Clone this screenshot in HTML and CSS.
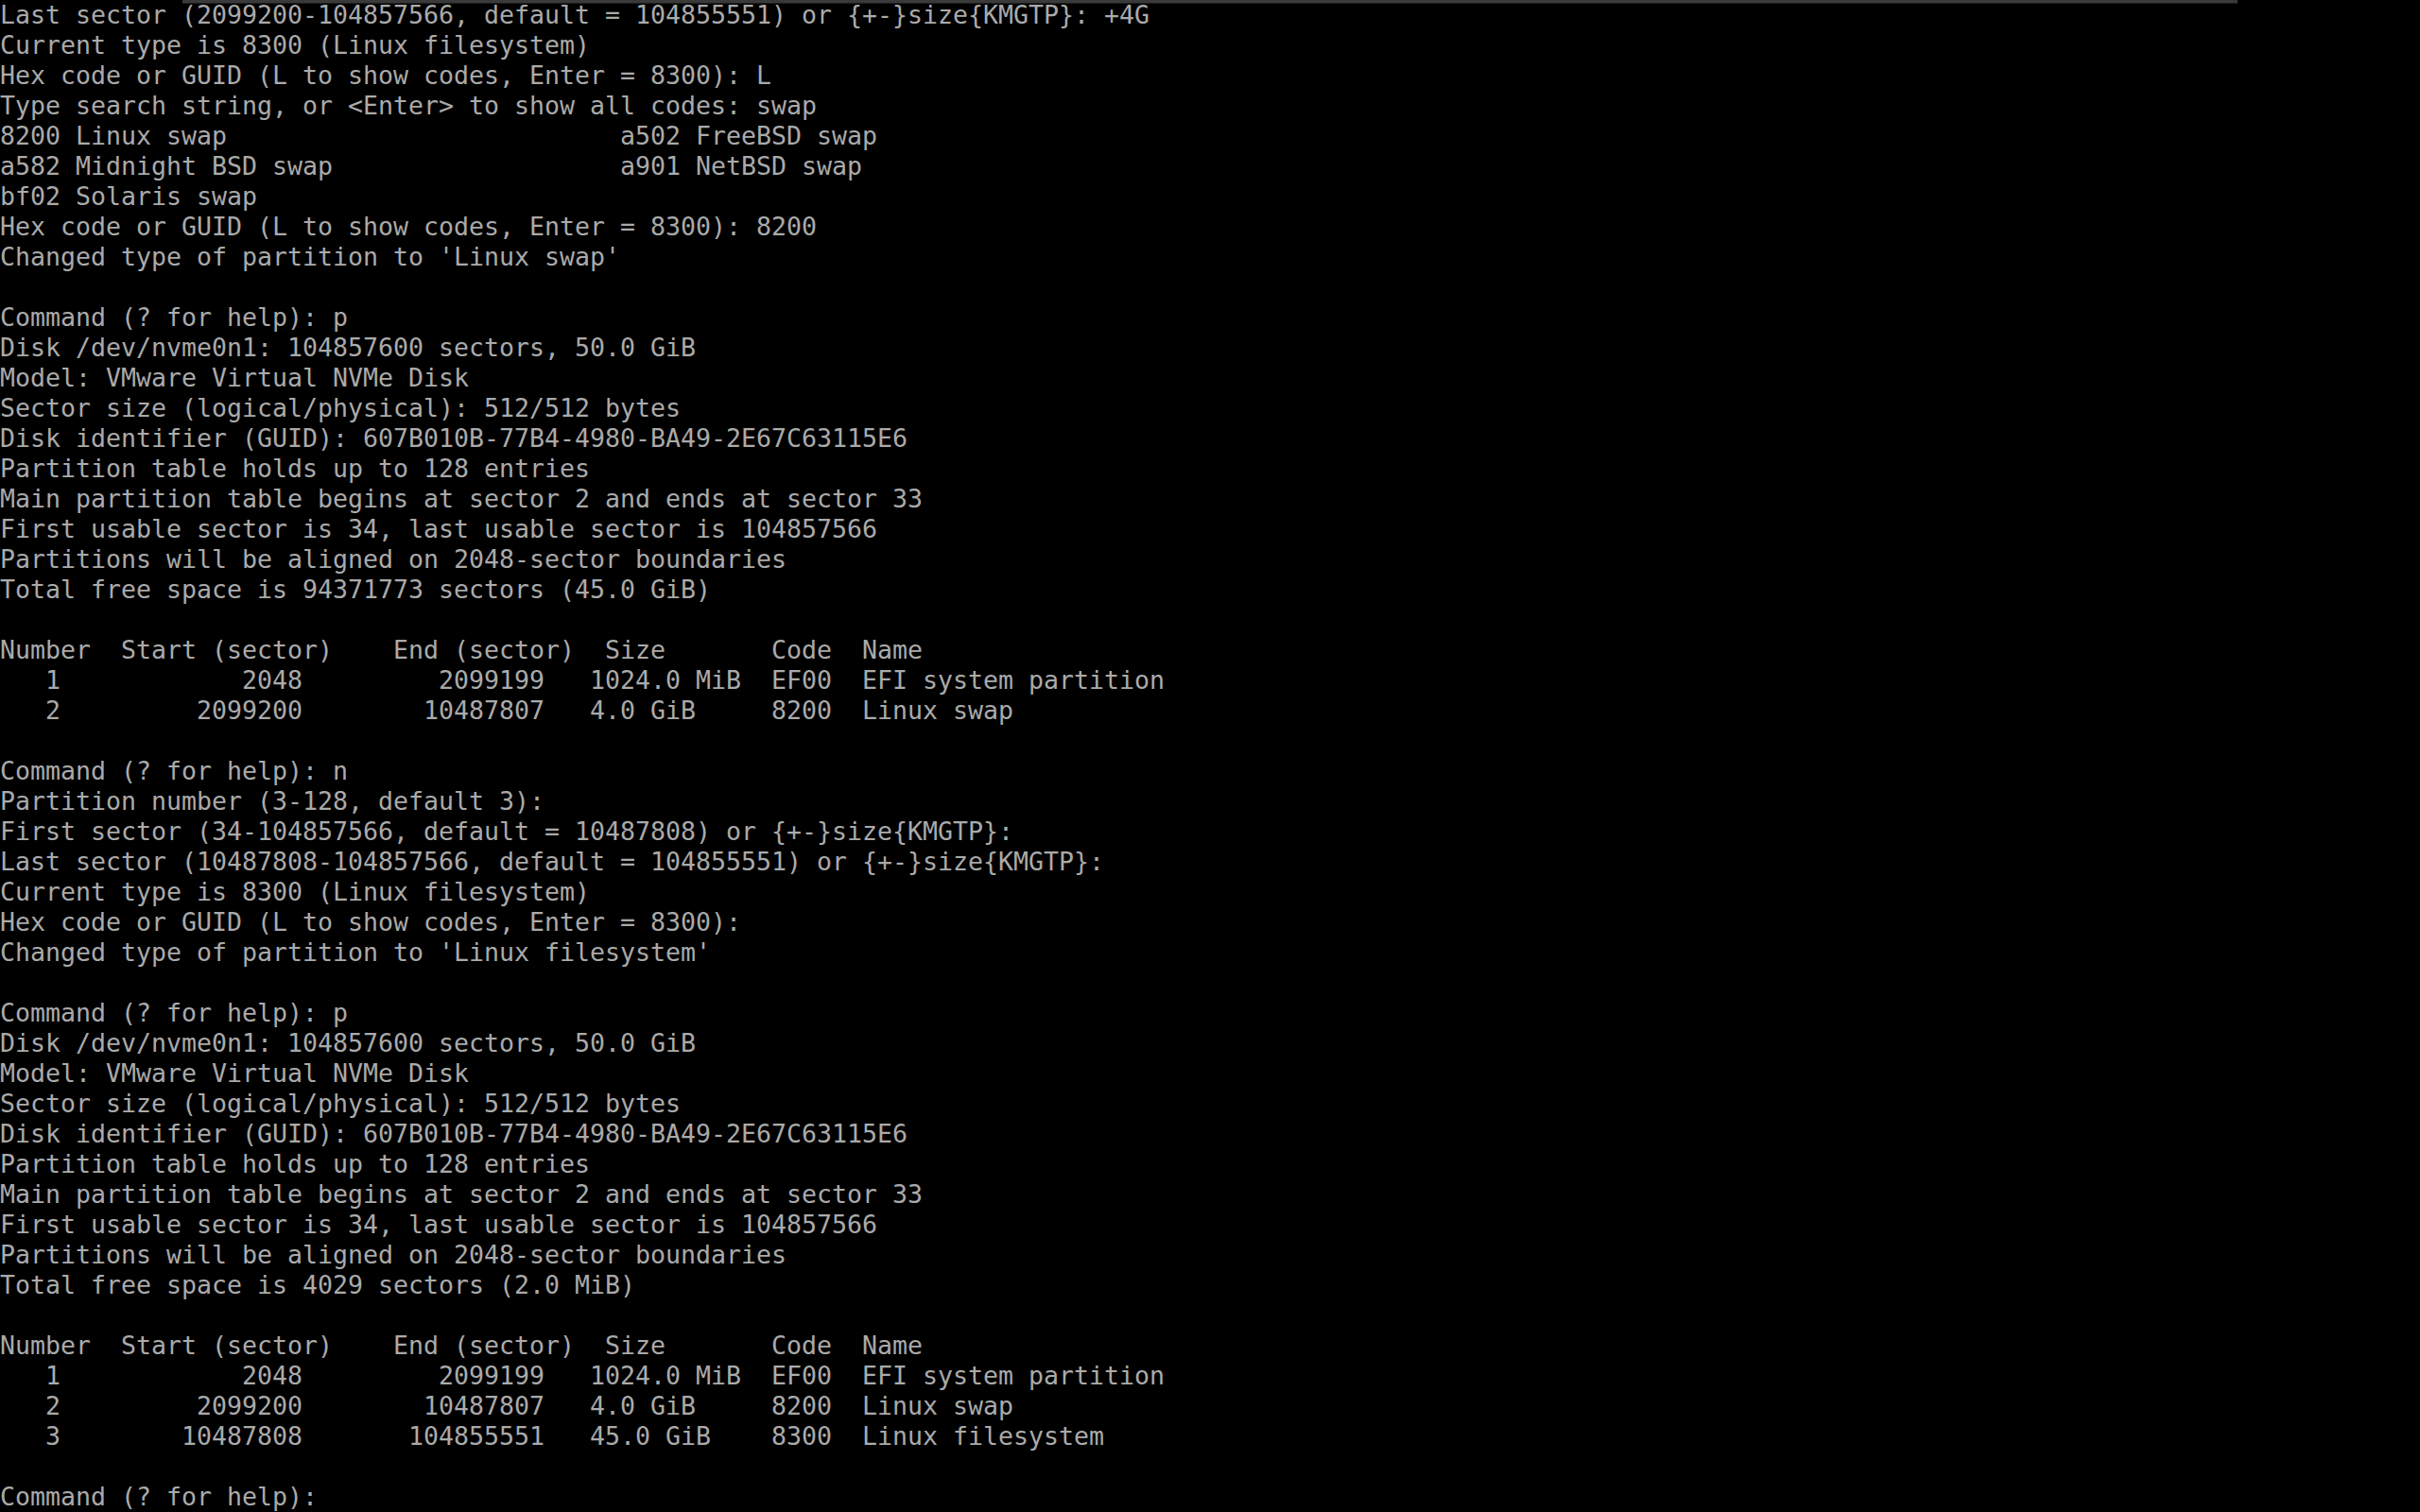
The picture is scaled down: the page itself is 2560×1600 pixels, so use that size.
FILE: index.html
```html
<!DOCTYPE html>
<html lang="en">
<head>
<meta charset="utf-8">
<title>gdisk console</title>
<link rel="stylesheet" href="styles.css">
</head>
<body>
<div class="screen">
<div class="edge-bar"></div>
<pre class="console">Last sector (2099200-104857566, default = 104855551) or {+-}size{KMGTP}: +4G
Current type is 8300 (Linux filesystem)
Hex code or GUID (L to show codes, Enter = 8300): L
Type search string, or &lt;Enter&gt; to show all codes: swap
8200 Linux swap                          a502 FreeBSD swap
a582 Midnight BSD swap                   a901 NetBSD swap
bf02 Solaris swap
Hex code or GUID (L to show codes, Enter = 8300): 8200
Changed type of partition to 'Linux swap'

Command (? for help): p
Disk /dev/nvme0n1: 104857600 sectors, 50.0 GiB
Model: VMware Virtual NVMe Disk
Sector size (logical/physical): 512/512 bytes
Disk identifier (GUID): 607B010B-77B4-4980-BA49-2E67C63115E6
Partition table holds up to 128 entries
Main partition table begins at sector 2 and ends at sector 33
First usable sector is 34, last usable sector is 104857566
Partitions will be aligned on 2048-sector boundaries
Total free space is 94371773 sectors (45.0 GiB)

Number  Start (sector)    End (sector)  Size       Code  Name
   1            2048         2099199   1024.0 MiB  EF00  EFI system partition
   2         2099200        10487807   4.0 GiB     8200  Linux swap

Command (? for help): n
Partition number (3-128, default 3):
First sector (34-104857566, default = 10487808) or {+-}size{KMGTP}:
Last sector (10487808-104857566, default = 104855551) or {+-}size{KMGTP}:
Current type is 8300 (Linux filesystem)
Hex code or GUID (L to show codes, Enter = 8300):
Changed type of partition to 'Linux filesystem'

Command (? for help): p
Disk /dev/nvme0n1: 104857600 sectors, 50.0 GiB
Model: VMware Virtual NVMe Disk
Sector size (logical/physical): 512/512 bytes
Disk identifier (GUID): 607B010B-77B4-4980-BA49-2E67C63115E6
Partition table holds up to 128 entries
Main partition table begins at sector 2 and ends at sector 33
First usable sector is 34, last usable sector is 104857566
Partitions will be aligned on 2048-sector boundaries
Total free space is 4029 sectors (2.0 MiB)

Number  Start (sector)    End (sector)  Size       Code  Name
   1            2048         2099199   1024.0 MiB  EF00  EFI system partition
   2         2099200        10487807   4.0 GiB     8200  Linux swap
   3        10487808       104855551   45.0 GiB    8300  Linux filesystem

Command (? for help): </pre>
</div>
</body>
</html>
```
FILE: styles.css
```css
html, body {
  margin: 0;
  padding: 0;
  background: #000;
  width: 2560px;
  height: 1600px;
  overflow: hidden;
}
.screen {
  position: relative;
  width: 2560px;
  height: 1600px;
  background: #000;
}
.edge-bar {
  position: absolute;
  top: 0;
  left: 193px;
  width: 2174px;
  height: 3px;
  background: #3a3a3a;
  border-bottom: 1px solid #1e1e1e;
}
.console {
  margin: 0;
  padding: 0;
  font-family: "DejaVu Sans Mono", monospace;
  font-size: 26.58px;
  line-height: 32px;
  color: #aaaaaa;
  white-space: pre;
}
```
